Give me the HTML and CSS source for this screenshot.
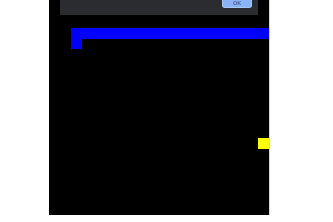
FILE: index.html
```html
<html lang="en">
<head>
    <meta charset="utf-8">
    <title>Stage</title>
    <link rel="stylesheet" href="styles.css">
</head>
<body>
<div class="stage">
    <div class="dialog">
        <div class="dialog-actions">
            <button class="btn">OK</button>
        </div>
    </div>
    <div class="corner"></div>
    <div class="marker"></div>
</div>
</body>
</html>
```

FILE: styles.css
```css
html, body {
    margin: 0;
    padding: 0;
    background: #ffffff;
    overflow: hidden;
}

body {
    font-family: Roboto, "Liberation Sans", sans-serif;
}

.stage {
    margin-left: 49px;
    width: 220px;
    height: 215px;
    background: #000000;
    border-right: 1px solid #d4d4d4;
    display: flex;
    flex-direction: column;
    overflow: hidden;
}

.dialog {
    margin: 0 11px;
    height: 15px;
    background: #2b2c2f;
    display: flex;
    flex-direction: column;
    justify-content: flex-end;
    flex-shrink: 0;
}

.dialog-actions {
    display: flex;
    justify-content: flex-end;
    padding: 0 6px 7px 0;
}

.btn {
    width: 30px;
    height: 8px;
    padding: 0;
    background: #8ab4f8;
    border: 1px solid #a8c7fa;
    border-top: none;
    border-radius: 0 0 3px 3px;
    color: #3c4043;
    font-size: 6px;
    line-height: 5px;
    font-family: Roboto, sans-serif;
    display: flex;
    align-items: flex-start;
    justify-content: center;
}

.corner {
    margin: 13px 0 0 22px;
    height: 10px;
    border-top: 11px solid #0000ff;
    border-left: 11px solid #0000ff;
    flex-shrink: 0;
}

.marker {
    align-self: flex-end;
    margin-top: 89px;
    width: 11px;
    height: 11px;
    background: #ffff00;
}
```
